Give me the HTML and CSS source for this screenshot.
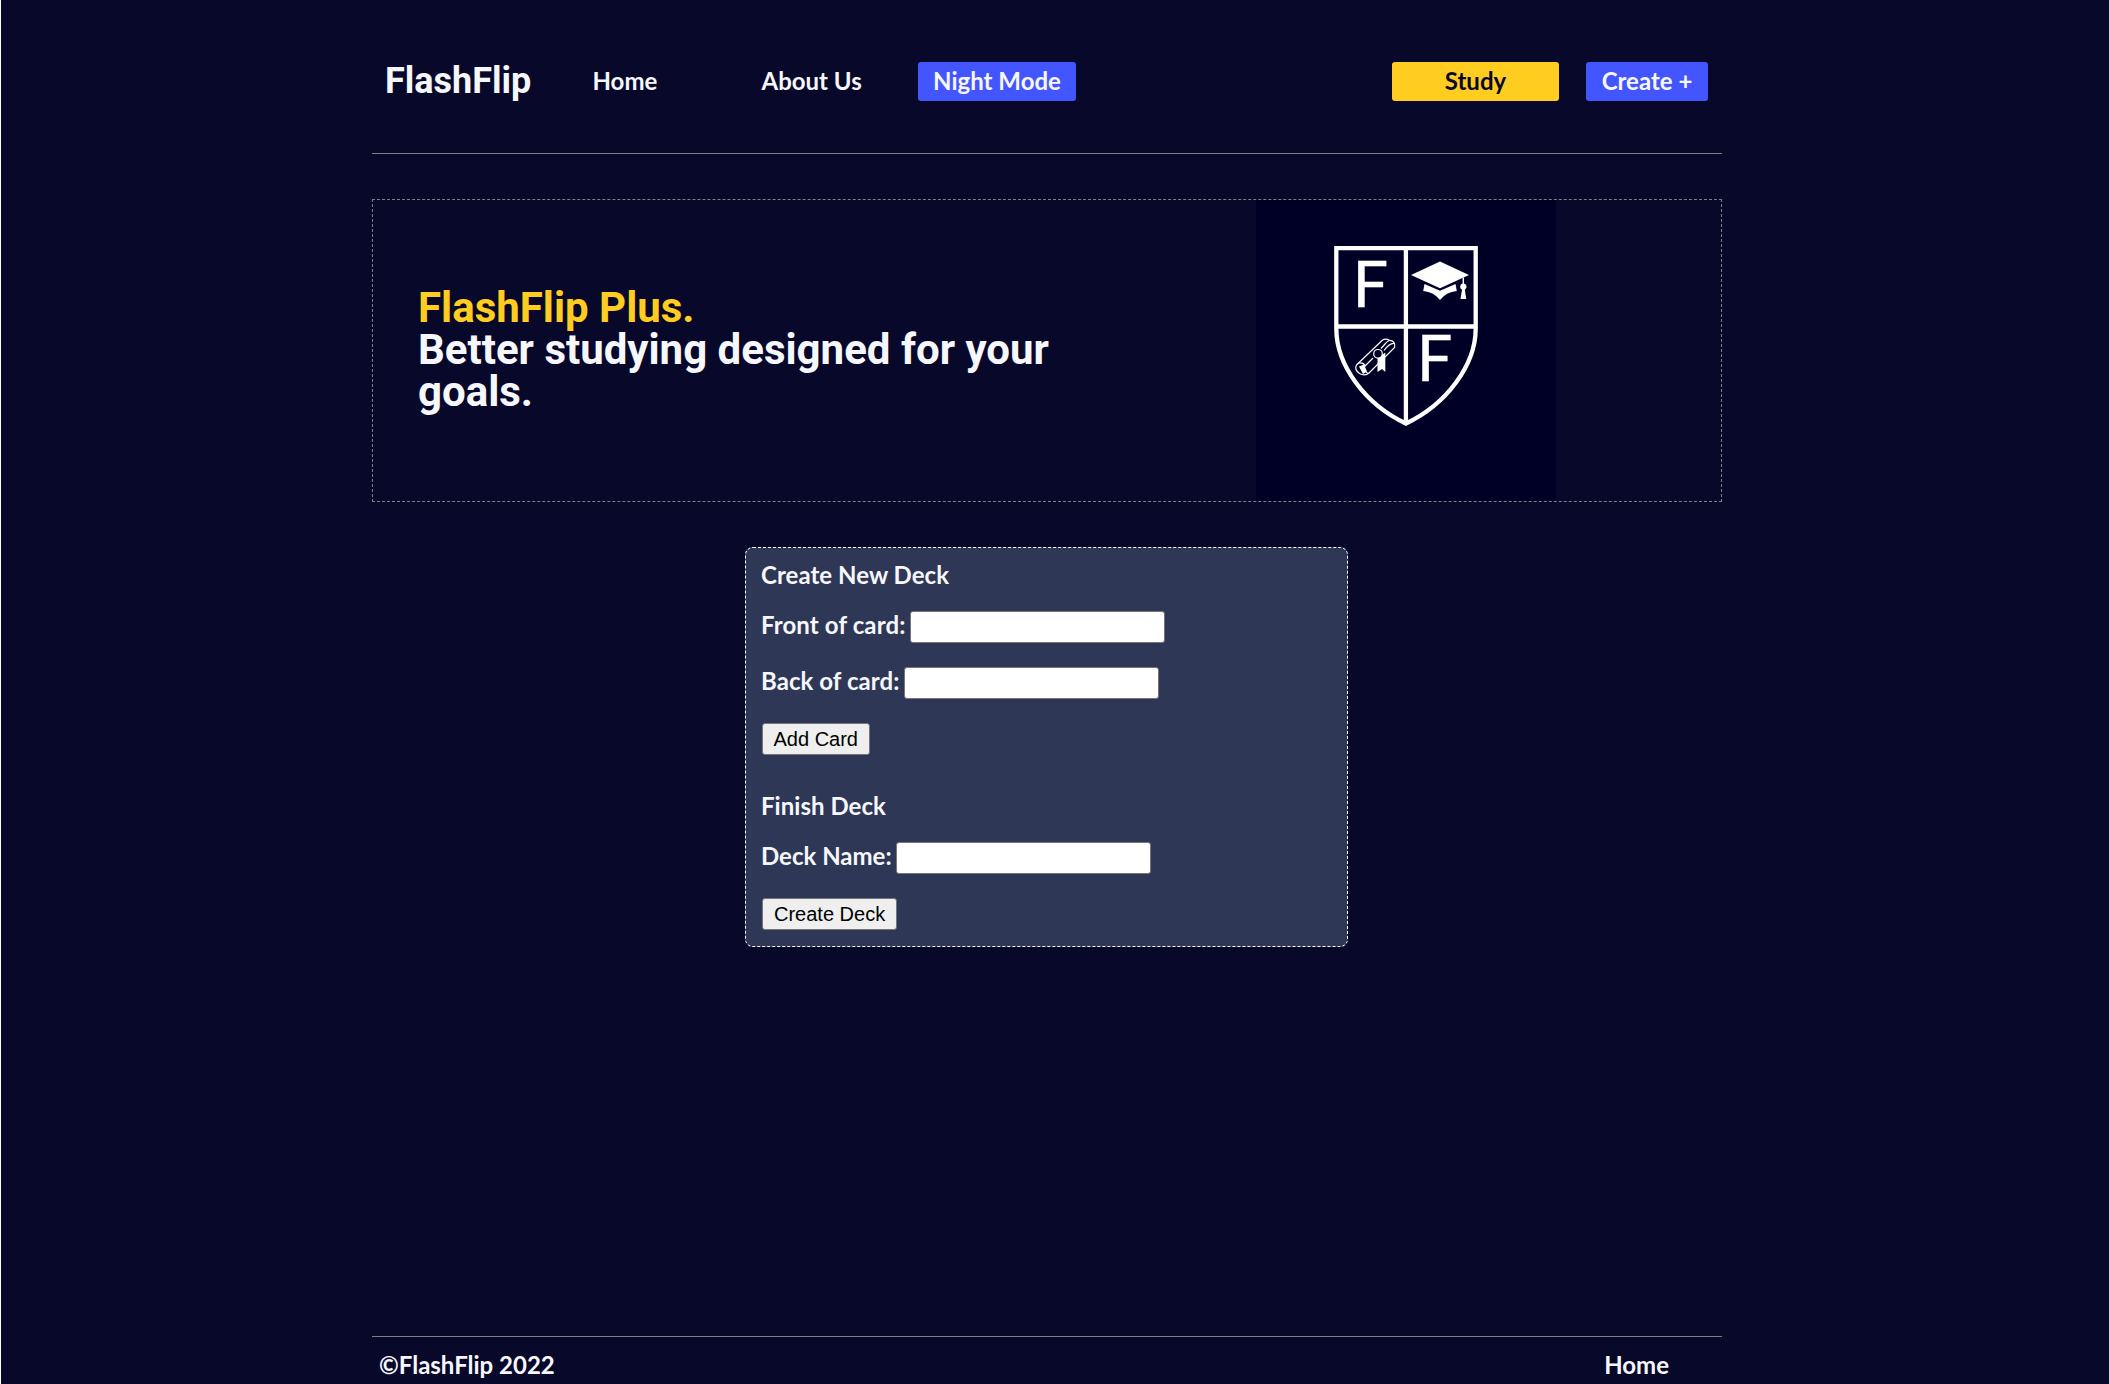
FILE: index.html
```html
<!DOCTYPE html>
<html lang="en">
<head>
<meta charset="utf-8">
<title>FlashFlip</title>
<link rel="stylesheet" href="styles.css">
</head>
<body>
<div class="page">
  <header class="header">
    <a class="brand">FlashFlip</a>
    <a class="nav-link nav-home">Home</a>
    <a class="nav-link nav-about">About Us</a>
    <a class="pill pill-mode">Night Mode</a>
    <a class="pill pill-study">Study</a>
    <a class="pill pill-create">Create +</a>
  </header>
  <section class="hero">
    <h1 class="hero-title"><span class="accent">FlashFlip Plus.</span><br>Better studying designed for your goals.</h1>
    <svg class="crest" viewBox="0 0 300 300" width="300" height="300">
      <g fill="none" stroke="#fff" stroke-width="4.3">
        <path d="M80.3 128V47.600H219.7V128C219.7 165 190 204 149.9 223C109.500 204 80.300 165 80.300 128Z"/>
        <path d="M149.900 48V222M80 126H220"/>
      </g>
      <g class="crest-letter">
        <text x="96.500" y="106">F</text>
        <text x="160.800" y="180.500">F</text>
      </g>
      <g fill="#fff">
        <path d="M155 74.500L184 61L213 74.500L184 87.700Z"/>
        <path d="M168.500 83.500L184 90.300L199.500 83.500L200.800 90.500Q190 91.500 184 99.500Q178 91.500 167.200 90.500Z"/>
        <path d="M206.600 77H208V83A3.400 3.400 0 0 1 208.800 89.300L210.300 98.500H204.500L206 89.300A3.400 3.400 0 0 1 206.600 83Z"/>
        <path d="M121.500 158L129.300 152V171.500L126 168.500L121.500 171.500Z"/>
        <path d="M103 166L108 164L111 171L107 173.500Z"/>
      </g>
      <g fill="none" stroke="#fff" stroke-width="1.200">
        <path d="M100.500 164.500L126 140Q129.500 137.500 133.500 139.800Q139.500 140 138.600 147L113 172.500Q109 176 103.500 173Q98 169 100.500 164.500Z"/>
        <path d="M133.500 139.800Q131 141 129.500 143L125 148M138.600 143Q134 142 128 150M102.500 162.500Q108 162 109 165.500L117 157.500M109 165.500Q106 169 112 173"/>
        <circle cx="122" cy="153.300" r="4.300" fill="#000026"/>
      </g>
    </svg>
  </section>
  <main class="deck-form">
    <h2 class="form-title">Create New Deck</h2>
    <div class="row"><label class="label-front" for="front">Front of card:</label><input id="front" type="text"></div>
    <div class="row"><label class="label-back" for="back">Back of card:</label><input id="back" type="text"></div>
    <button type="button">Add Card</button>
    <h2 class="form-title form-title-next">Finish Deck</h2>
    <div class="row"><label class="label-name" for="name">Deck Name:</label><input id="name" type="text"></div>
    <button class="submit" type="button">Create Deck</button>
  </main>
  <footer class="footer"><span>©FlashFlip 2022</span><a>Home</a></footer>
</div>
</body>
</html>
```
FILE: styles.css
```css
* { box-sizing: border-box; }
html { background: #08082b; }
body {
  margin: 0;
  border-left: 1px solid #fff;
  background: #08082b;
  color: #f6f7fb;
  font: 700 24px/30px Lato, sans-serif;
}
.page {
  width: 1350px;
  height: 1384px;
  margin-left: 371px;
  display: flex;
  flex-direction: column;
  overflow: hidden;
}
.header {
  height: 154px;
  padding: 62px 14px 0 13px;
  border-bottom: 1px solid #808080;
  display: flex;
  align-items: flex-start;
}
.brand {
  width: 207.5px;
  font: 700 36px/38px Roboto, sans-serif;
}
.nav-link { line-height: 37px; }
.nav-home { width: 169px; }
.pill {
  height: 39px;
  line-height: 37px;
  border-radius: 3px;
  background: #4255ff;
  text-align: center;
}
.nav-about { width: 156.5px; }
.pill-mode { width: 158px; }
.pill-study {
  width: 167px;
  margin: 0 27px 0 auto;
  background: #ffcd1f;
  color: #0a092d;
}
.pill-create { width: 122px; }
.hero {
  height: 303px;
  margin-top: 45px;
  border: 1px dashed #808080;
  display: flex;
  align-items: center;
}
.hero-title {
  width: 680px;
  margin: 0 0 2px 45px;
  font: 700 42px/42px Roboto, sans-serif;
}
.accent { color: #ffcd1f; }
.crest { margin-left: 158px; background: #000026; height: 301px; }
.crest-letter { fill: #fff; stroke: #fff; stroke-width: 0.4px; font: 400 63px Lato, sans-serif; }
.deck-form {
  width: 603px;
  height: 400px;
  margin: 45px 0 0 373px;
  padding: 12px 15px;
  border: 1px dashed #fff;
  border-radius: 8px;
  background: #2e3856;
}
.form-title { margin: 0 0 21px; font: inherit; letter-spacing: 0.04px; }
.form-title-next { margin: 36px 0 21px; }
.row {
  height: 32px;
  margin-bottom: 24px;
  display: flex;
}
label { line-height: 28px; white-space: nowrap; }
.label-front { width: 149px; letter-spacing: 0.12px; }
.label-back { width: 143px; letter-spacing: 0.06px; }
.label-name { width: 135px; }
input {
  width: 255px;
  height: 32px;
  margin: 0;
  padding: 1px 3px;
  border: 1px solid #767676;
  border-radius: 3px;
  background: #fff;
  font: 20px "Liberation Sans", sans-serif;
}
button {
  display: block;
  height: 32px;
  margin: 0 0 0 1px;
  padding: 0 10.5px;
  border: 1px solid #767676;
  border-radius: 3px;
  background: #efefef;
  color: #000;
  font: 20px/28px "Liberation Sans", sans-serif;
}
.submit { padding: 0 11px; }
.footer {
  height: 48px;
  margin-top: auto;
  padding: 13px 53px 0 7px;
  border-top: 1px solid #808080;
  display: flex;
  justify-content: space-between;
}
```
